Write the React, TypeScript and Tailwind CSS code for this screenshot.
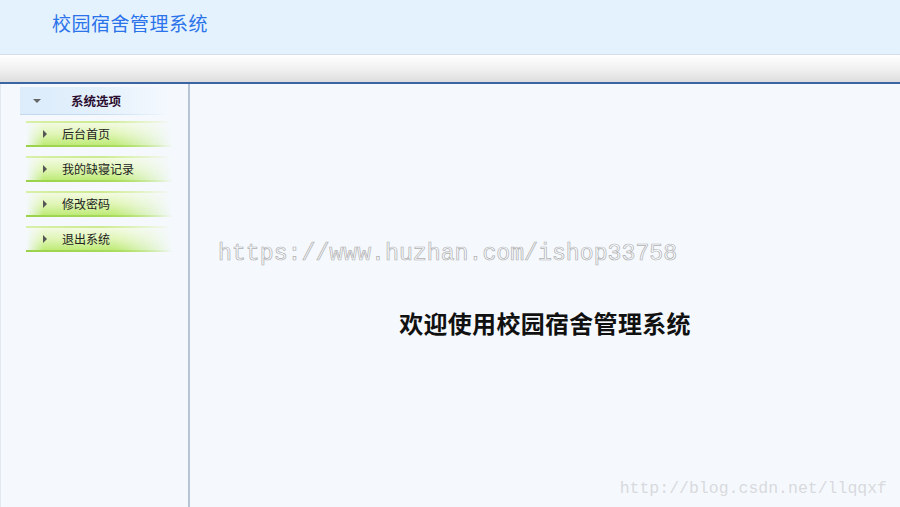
import React from 'react';

const menu = ['后台首页', '我的缺寝记录', '修改密码', '退出系统'];

const cjk = "font-['SimSun','Noto_Sans_CJK_SC',sans-serif]";

const App = () => {
  return (
    <div className={`w-[900px] h-[507px] overflow-hidden flex flex-col bg-[#f5f9fe] ${cjk}`}>
      {/* Top banner */}
      <div className="h-[55px] shrink-0 bg-[#e4f2fd] border-b border-[#d6dde6] flex items-center pl-[52px]">
        <h1 className="text-[19px] leading-none text-[#2b73ea] tracking-[0.5px] pb-[9px]">校园宿舍管理系统</h1>
      </div>

      {/* Toolbar strip */}
      <div className="h-[27px] shrink-0 bg-gradient-to-b from-white via-[#f1f1f1] to-[#dedede]" />
      <div className="h-[2px] shrink-0 bg-[#3a65a4]" />

      <div className="flex flex-1 min-h-0">
        {/* Sidebar */}
        <aside className="w-[190px] shrink-0 border-l border-[#e2e8f0] border-r-2 border-r-[#b7c4d6] pt-[3px]">
          <div className="relative ml-[19px] w-[152px] h-[28px] flex items-center bg-gradient-to-r from-[#dcecfb] via-[#e3f0fc] to-transparent">
            <div className="absolute left-0 right-0 bottom-0 h-px bg-gradient-to-r from-[#c2d8ef] via-[#c8dcf1] to-transparent" />
            <span className="ml-[13px] w-0 h-0 border-l-[4px] border-r-[4px] border-t-[4px] border-l-transparent border-r-transparent border-t-[#666]" />
            <span className="ml-[30px] text-[12.5px] font-bold text-[#2a0c2e]">系统选项</span>
          </div>
          <ul className="mt-[6px] ml-[25px] w-[147px] flex flex-col gap-[9px]">
            {menu.map((m) => (
              <li key={m} className="relative h-[26px] flex items-center">
                <div className="absolute inset-0 bg-gradient-to-b from-[#f6fbe9] via-[#e0f5b5] to-[#b8e86a] [mask-image:linear-gradient(to_right,transparent,black_12%,black_60%,transparent)]" />
                <div className="absolute left-0 right-0 top-0 h-[2px] bg-gradient-to-r from-[#d8f0a8] via-[#cdeb90] to-transparent" />
                <div className="absolute left-0 right-0 bottom-0 h-[2px] bg-gradient-to-r from-[#9bd24a] via-[#a6d95a] to-transparent" />
                <span className="relative ml-[17px] w-0 h-0 border-t-[4px] border-b-[4px] border-l-[4px] border-t-transparent border-b-transparent border-l-[#555]" />
                <span className="relative ml-[15px] text-[12px] text-[#222]">{m}</span>
              </li>
            ))}
          </ul>
        </aside>

        {/* Main content */}
        <main className="relative flex-1 flex flex-col items-center">
          <div className="self-start mt-[159px] ml-[28px] text-[23.2px] leading-none font-['Liberation_Mono',monospace] text-[#f9fbfe] [-webkit-text-stroke:0.7px_#b0b0b0]">
            https://www.huzhan.com/ishop33758
          </div>
          <div className="mt-[45px] text-[24px] leading-none font-bold text-[#111] tracking-[0.3px]">
            欢迎使用校园宿舍管理系统
          </div>
          <div className="absolute right-[13px] bottom-[10px] text-[16.5px] leading-none font-['Liberation_Mono',monospace] text-[#d9dadd]">
            http://blog.csdn.net/llqqxf
          </div>
        </main>
      </div>
    </div>
  );
};

export default App;
